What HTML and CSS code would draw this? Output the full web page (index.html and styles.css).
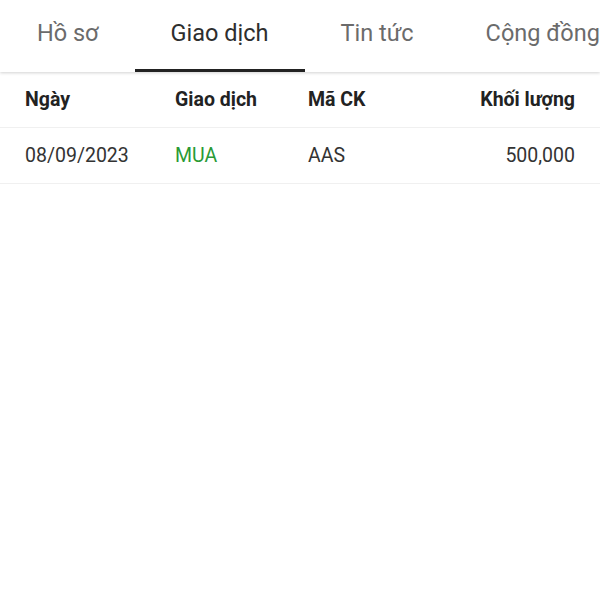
FILE: index.html
```html
<!DOCTYPE html>
<html lang="vi">
<head>
  <meta charset="UTF-8">
  <link rel="stylesheet" href="styles.css">
  <title>Giao dịch</title>
</head>
<body>
  <div class="tabs">
    <div class="tab">Hồ sơ</div>
    <div class="tab active">Giao dịch</div>
    <div class="tab">Tin tức</div>
    <div class="tab">Cộng đồng</div>
  </div>
  <div class="table">
    <div class="row head">
      <div>Ngày</div>
      <div>Giao dịch</div>
      <div>Mã CK</div>
      <div class="num">Khối lượng</div>
    </div>
    <div class="row">
      <div>08/09/2023</div>
      <div class="buy">MUA</div>
      <div>AAS</div>
      <div class="num">500,000</div>
    </div>
  </div>
</body>
</html>
```

FILE: styles.css
```css
body {
  margin: 0;
  font-family: Roboto, "Noto Sans", sans-serif;
  background: #fff;
  width: 600px;
  overflow: hidden;
}

.tabs {
  display: flex;
  height: 72px;
  white-space: nowrap;
  overflow: hidden;
  box-shadow: 0 1px 3px rgba(0, 0, 0, 0.18);
  position: relative;
}
.tab {
  flex: none;
  padding: 0 36px;
  font-size: 23.5px;
  color: #6b6b6b;
  line-height: 67px;
  border-bottom: 3px solid transparent;
  height: 69px;
}
.tab:first-child {
  padding-left: 37px;
}
.tab.active {
  color: #2e2e2e;
  border-bottom-color: #222;
}

.row {
  display: grid;
  grid-template-columns: 150px 133px 1fr auto;
  align-items: center;
  height: 55px;
  padding: 0 25px;
  border-bottom: 1px solid #f0f0f0;
  font-size: 19.5px;
  color: #333;
}
.row.head {
  font-weight: bold;
  color: #222;
}
.num {
  text-align: right;
}
.buy {
  color: #2a9a35;
}
```
